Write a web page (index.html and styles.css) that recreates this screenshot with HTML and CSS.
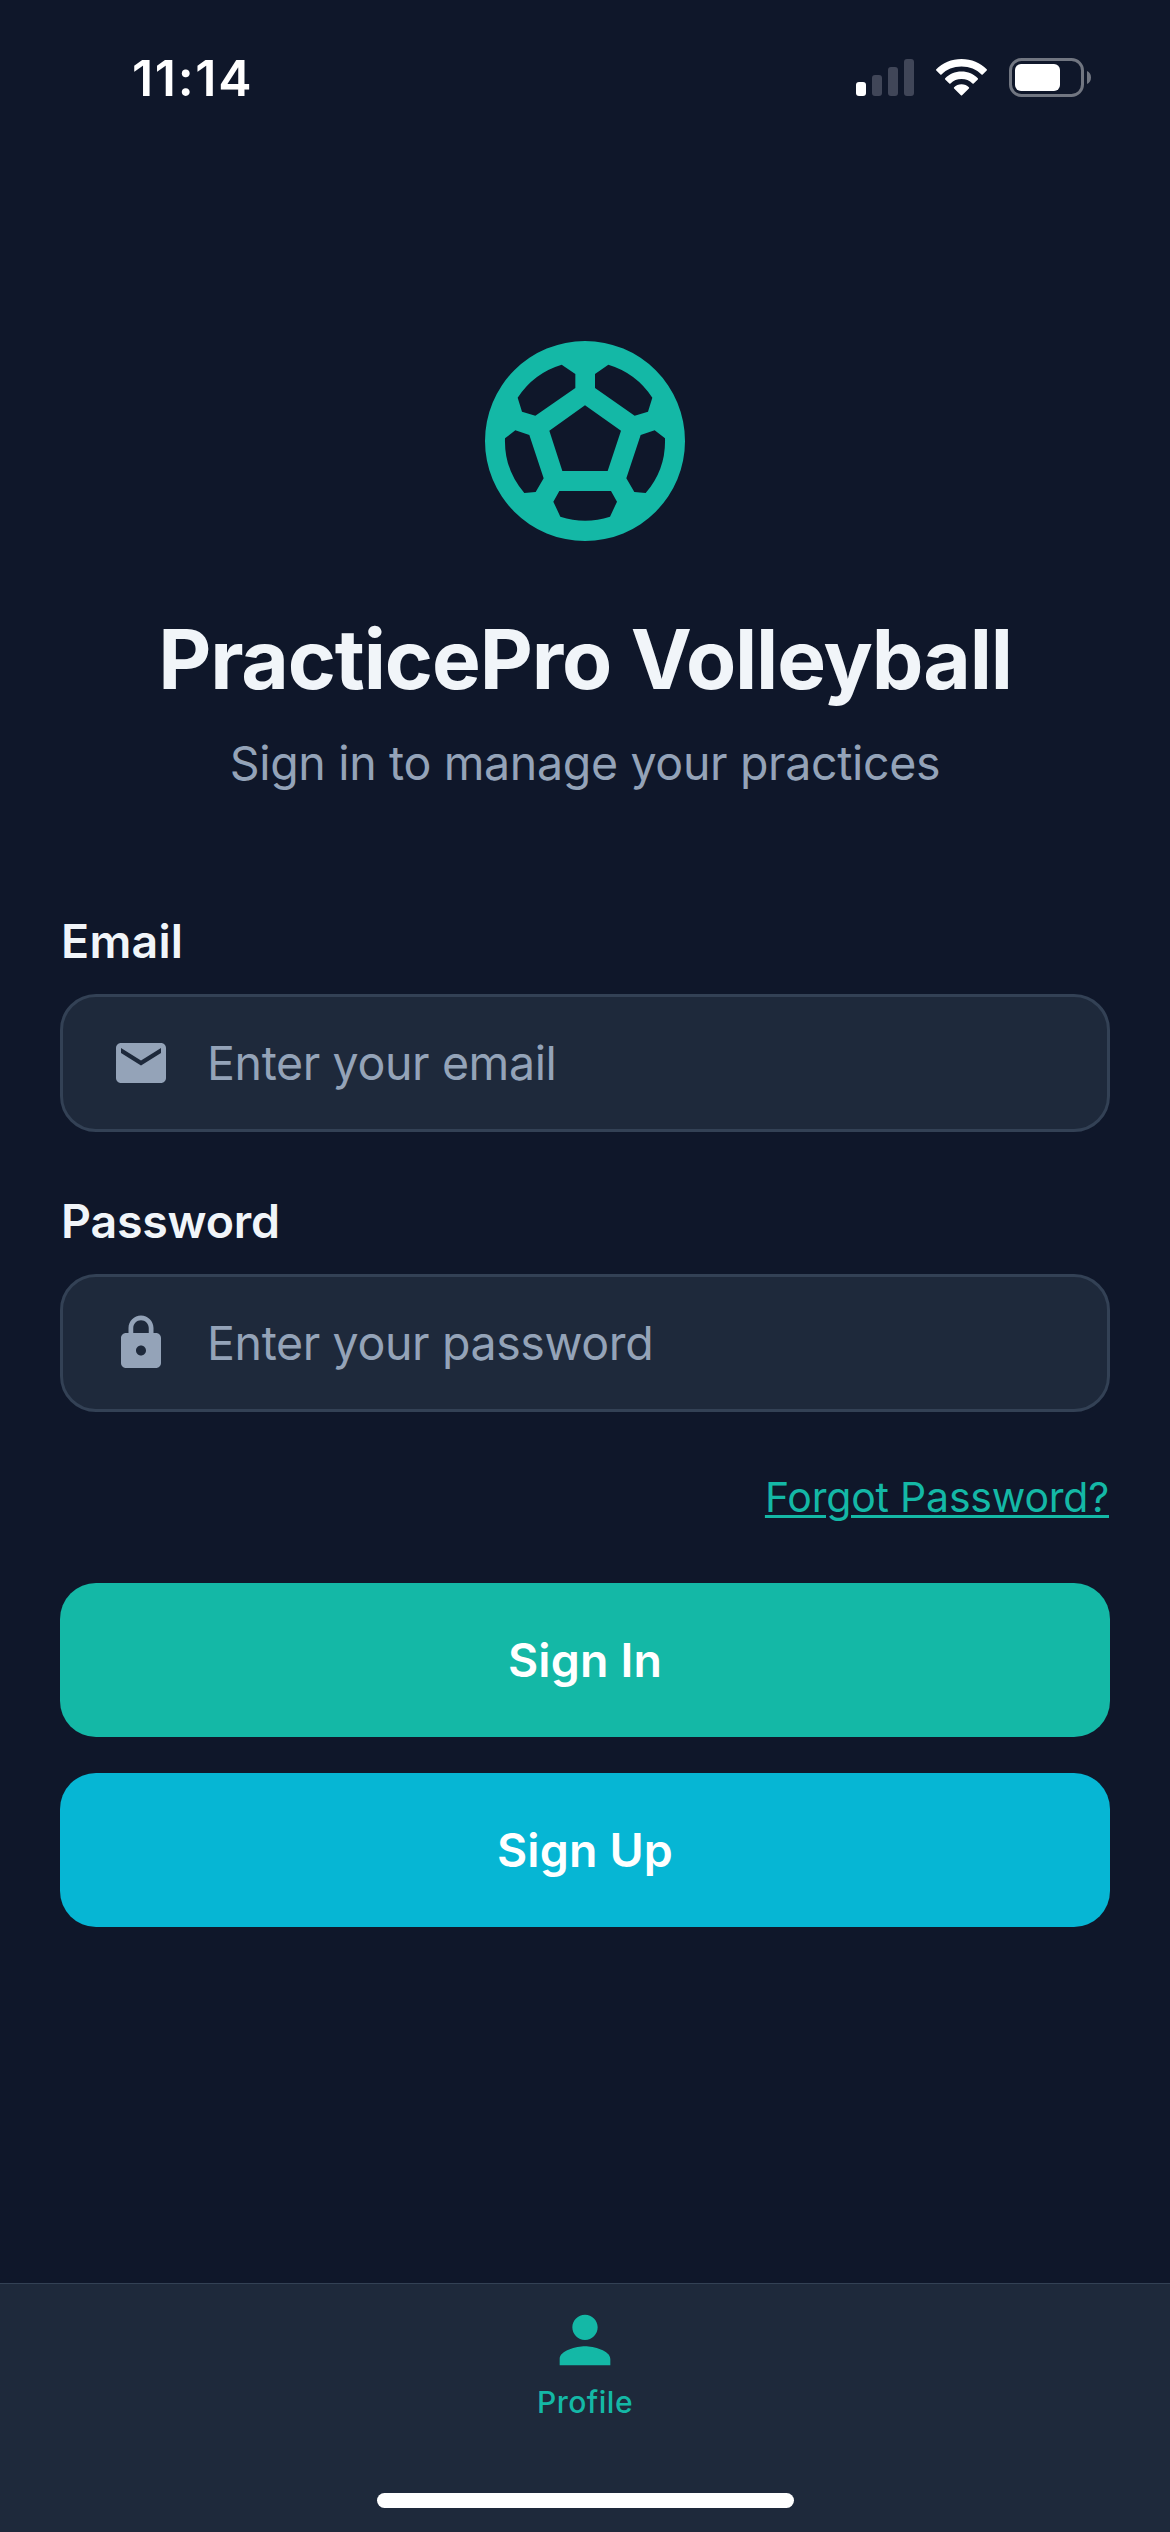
FILE: index.html
```html
<!DOCTYPE html>
<html lang="en">
<head>
<meta charset="utf-8">
<title>PracticePro Volleyball</title>
<link rel="stylesheet" href="styles.css">
</head>
<body>
<div class="screen">
  <header class="status">
    <span class="time">11:14</span>
    <div class="indicators">
      <svg class="signal" viewBox="0 0 58 37">
        <rect x="0" y="23" width="10" height="14" rx="3" fill="#fff"/>
        <g fill="#404658">
          <rect x="16" y="16" width="10" height="21" rx="3"/>
          <rect x="32" y="8" width="10" height="29" rx="3"/>
          <rect x="48" y="0" width="10" height="37" rx="3"/>
        </g>
      </svg>
      <svg class="wifi" viewBox="0 0 51 37" fill="#fff">
        <path d="M25.500 0C35.500 0 44.500 3.900 50.700 10.200Q51.200 10.900 50.700 11.500L46.700 15.400Q46.100 15.900 45.500 15.400C40.500 10.300 33.500 7.400 25.500 7.400S10.500 10.300 5.500 15.400Q4.900 15.900 4.300 15.400L.3 11.500Q-.2 10.900 .3 10.200C6.500 3.900 15.500 0 25.500 0Z"/>
        <path d="M25.500 12.600C32 12.600 37.700 15.200 41.800 19.200Q42.300 19.900 41.800 20.400L37.700 24.400Q37.100 24.900 36.500 24.400C33.500 21.600 29.800 20.100 25.500 20.100S17.500 21.600 14.500 24.400Q13.900 24.900 13.300 24.400L9.200 20.400Q8.700 19.900 9.200 19.200C13.300 15.200 19 12.600 25.500 12.600Z"/>
        <path d="M25.500 25.300C28.500 25.300 31 26.500 32.900 28.300Q33.500 29 32.900 29.600L26.100 36.300Q25.500 36.900 24.900 36.300L18.100 29.600Q17.500 29 18.100 28.300C20 26.500 22.500 25.300 25.500 25.300Z"/>
      </svg>
      <svg class="battery" viewBox="0 0 82 39">
        <rect x="1.500" y="1.500" width="72" height="36" rx="11" fill="none" stroke="#717681" stroke-width="3"/>
        <rect x="6" y="6" width="45" height="27" rx="6" fill="#fff"/>
        <path d="M78 13C80.500 14 82 16.500 82 19.500S80.500 25 78 26Z" fill="#717681"/>
      </svg>
    </div>
  </header>

  <main class="content">
    <section class="brand">
      <svg class="ball" viewBox="45 48 600 600">
        <path fill="#14b8a6" fill-rule="evenodd" d="M345 48a300 300 0 1 0 0 600a300 300 0 1 0 0-600Z
          M345 241L453 317L413 438H277L238 317Z
          M275 119L316 147V189L196 272L156 260L143 218A240 240 0 0 1 275 119Z
          M415 119L375 147V189L494 272L534 260L547 218A240 240 0 0 0 415 119Z
          M105 340L136 316L178 330L221 460L197 501L163 504A240 240 0 0 1 105 340Z
          M585 340L554 316L512 330L469 460L493 501L527 504A240 240 0 0 0 585 340Z
          M268 498H423L441 530L420 575A240 240 0 0 1 271 575L250 530Z"/>
      </svg>
      <h1 class="title">PracticePro Volleyball</h1>
      <p class="subtitle">Sign in to manage your practices</p>
    </section>

    <form class="form">
      <div class="field">
        <label class="label label-email" for="email">Email</label>
        <div class="control">
          <svg class="field-icon" viewBox="0 0 24 24"><path d="M20 4H4c-1.100 0-1.990.9-1.990 2L2 18c0 1.100.9 2 2 2h16c1.100 0 2-.9 2-2V6c0-1.100-.9-2-2-2zm0 4l-8 5-8-5V6l8 5 8-5v2z"/></svg>
          <input class="input" id="email" type="email" placeholder="Enter your email">
        </div>
      </div>
      <div class="field">
        <label class="label" for="password">Password</label>
        <div class="control">
          <svg class="field-icon" viewBox="0 0 24 24"><path d="M18 8h-1V6c0-2.760-2.240-5-5-5S7 3.240 7 6v2H6c-1.100 0-2 .9-2 2v10c0 1.100.9 2 2 2h12c1.100 0 2-.9 2-2V10c0-1.100-.9-2-2-2zm-6 9c-1.100 0-2-.9-2-2s.9-2 2-2 2 .9 2 2-.9 2-2 2zm3.100-9H8.900V6c0-1.710 1.390-3.100 3.100-3.100s3.100 1.390 3.100 3.100v2z"/></svg>
          <input class="input" id="password" type="password" placeholder="Enter your password">
        </div>
      </div>
      <a class="forgot" href="#">Forgot Password?</a>
      <div class="actions">
        <button class="button sign-in" type="button">Sign In</button>
        <button class="button sign-up" type="button">Sign Up</button>
      </div>
    </form>
  </main>

  <nav class="tabbar">
    <a class="tab" href="#">
      <svg class="tab-icon" viewBox="0 0 24 24"><path d="M12 12c2.210 0 4-1.790 4-4s-1.790-4-4-4-4 1.790-4 4 1.790 4 4 4zm0 2c-2.670 0-8 1.340-8 4v2h16v-2c0-2.660-5.330-4-8-4z"/></svg>
      <span class="tab-label">Profile</span>
    </a>
    <div class="home-indicator"></div>
  </nav>
</div>
</body>
</html>
```
FILE: styles.css
```css
* {
  box-sizing: border-box;
}

body {
  margin: 0;
  background: #0f172a;
  font-family: Inter, "Liberation Sans", sans-serif;
  color: #f1f5f9;
}

svg {
  display: block;
  flex: none;
}

.screen {
  display: flex;
  flex-direction: column;
  width: 1170px;
  height: 2532px;
}

/* Status bar */
.status {
  display: flex;
  justify-content: space-between;
  height: 141px;
  padding: 58px 79px 0 132px;
}

.time {
  height: 40px;
  line-height: 40px;
  font-size: 50px;
  font-weight: 600;
  letter-spacing: 1.7px;
  color: #fff;
}

.indicators {
  display: flex;
  height: 39px;
}

.signal {
  width: 58px;
  height: 37px;
  margin: 1px 22px 0 0;
}

.wifi {
  width: 51px;
  height: 37px;
  margin: 1px 22px 0 0;
}

.battery {
  width: 82px;
  height: 39px;
}

/* Brand block */
.content {
  flex: 1;
  padding: 200px 60px 0;
}

.brand {
  display: flex;
  flex-direction: column;
  align-items: center;
}

.ball {
  width: 200px;
  height: 200px;
}

.title {
  margin: 69px 0 0;
  line-height: 100px;
  font-size: 82px;
  font-weight: 700;
  letter-spacing: -1.14px;
  word-spacing: 1.5px;
}

.subtitle {
  margin: 23px 0 0;
  line-height: 60px;
  font-size: 46.5px;
  letter-spacing: -0.34px;
  color: #94a3b8;
}

/* Form */
.form {
  display: flex;
  flex-direction: column;
  margin-top: 119px;
}

.field {
  display: flex;
  flex-direction: column;
  gap: 24px;
  margin-bottom: 60px;
}

.label {
  padding-left: 1px;
  line-height: 58px;
  font-size: 46.5px;
  font-weight: 600;
  letter-spacing: -0.19px;
}

.label-email {
  letter-spacing: 0.23px;
}

.control {
  display: flex;
  align-items: center;
  gap: 36px;
  height: 138px;
  padding: 0 48px;
  border: 3px solid #334155;
  border-radius: 36px;
  background: #1e293b;
}

.field-icon {
  width: 60px;
  height: 60px;
  fill: #94a3b8;
}

.input {
  flex: 1;
  min-width: 0;
  height: 100%;
  padding: 0;
  border: 0;
  outline: 0;
  background: none;
  font: 400 46.5px Inter, "Liberation Sans", sans-serif;
  letter-spacing: -0.38px;
  color: #f1f5f9;
}

.input::placeholder {
  color: #94a3b8;
  opacity: 1;
}

.forgot {
  align-self: flex-end;
  margin-right: 1px;
  line-height: 50px;
  font-size: 41px;
  letter-spacing: -0.2px;
  color: #14b8a6;
  text-decoration: underline;
  text-decoration-thickness: 3px;
  text-underline-offset: 3px;
}

.actions {
  display: flex;
  flex-direction: column;
  gap: 36px;
  margin-top: 61px;
}

.button {
  height: 154px;
  padding: 0;
  border: 0;
  border-radius: 36px;
  font: 600 46.5px Inter, "Liberation Sans", sans-serif;
  letter-spacing: 0.18px;
  color: #fff;
}

.sign-in {
  background: #14b8a6;
}

.sign-up {
  background: #06b6d4;
}

/* Bottom navigation */
.tabbar {
  display: flex;
  flex-direction: column;
  align-items: center;
  justify-content: space-between;
  height: 249px;
  padding: 18px 0 24px;
  border-top: 1px solid #334155;
  background: #1e293b;
}

.tab {
  display: flex;
  flex-direction: column;
  align-items: center;
  gap: 4px;
  color: #14b8a6;
  text-decoration: none;
}

.tab-icon {
  width: 76px;
  height: 76px;
  fill: currentColor;
}

.tab-label {
  line-height: 40px;
  font-size: 30px;
  font-weight: 500;
  letter-spacing: 0.5px;
}

.home-indicator {
  width: 417px;
  height: 15px;
  border-radius: 8px;
  background: #fff;
}
```
